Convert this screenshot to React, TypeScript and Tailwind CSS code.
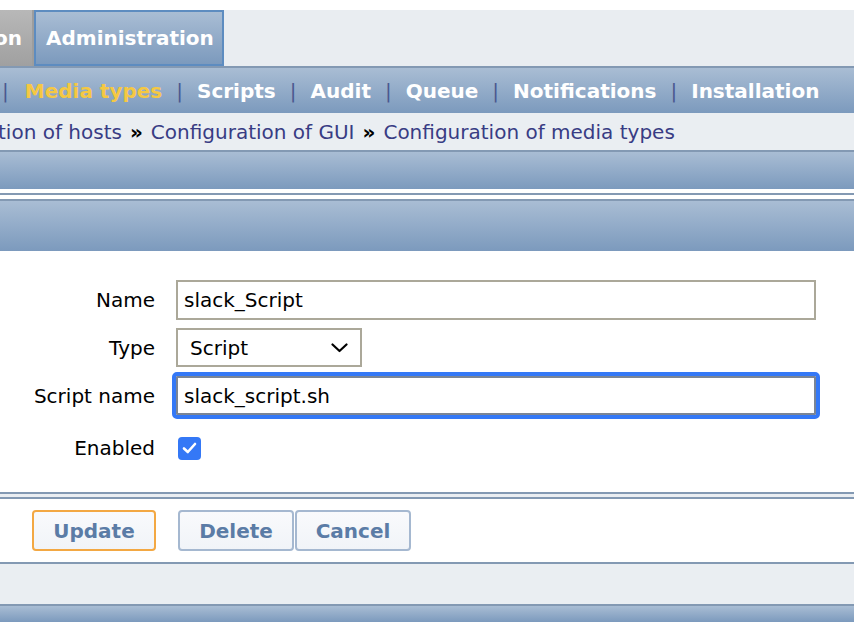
import { useState } from "react";

const font = "font-['DejaVu_Sans','Liberation_Sans',sans-serif]";

const subMenu = ["Media types", "Scripts", "Audit", "Queue", "Notifications", "Installation"];

const Bar = ({ h }: { h: string }) => (
  <div className={`${h} border-t-2 border-[#8399b3] bg-linear-to-b from-[#a9bdd4] to-[#7c9abd]`} />
);

const FormRow = ({ label, children, className = "" }: { label: string; children: React.ReactNode; className?: string }) => (
  <div className={`flex items-center ${className}`}>
    <label className="w-[155px] text-right text-[20px] text-black whitespace-nowrap">{label}</label>
    <div className="ml-[21px] flex items-center">{children}</div>
  </div>
);

const btn =
  "h-[41px] rounded-[4px] border-2 bg-linear-to-b from-[#f9fafc] to-[#f1f4f8] text-[20px] font-bold text-[#5b7ca6]";

export default function App() {
  const [name, setName] = useState("slack_Script");
  const [script, setScript] = useState("slack_script.sh");
  const [enabled, setEnabled] = useState(true);

  return (
    <div className={`w-[854px] h-[622px] overflow-hidden bg-white ${font}`}>
      <div className="h-[10px] bg-white" />

      {/* main tabs */}
      <div className="flex h-[56px] bg-[#e9edf1]">
        <div className="flex w-[34px] items-center justify-end overflow-hidden border-r-2 border-[#9d9d9d] bg-linear-to-b from-[#b8b8b8] to-[#a0a0a0] pr-[10px]">
          <span className="text-[20px] font-bold text-white">on</span>
        </div>
        <div className="flex w-[190px] items-center border-2 border-[#5d8cc0] bg-linear-to-b from-[#a9bdd4] to-[#7c9abd] pl-[10px]">
          <span className="text-[20px] font-bold text-white">Administration</span>
        </div>
      </div>

      {/* sub menu */}
      <div className="flex h-[47px] items-center whitespace-nowrap border-t-2 border-[#8399b3] bg-linear-to-b from-[#a9bdd4] to-[#7c9abd] text-[20px]">
        {subMenu.map((item, i) => (
          <div key={item} className="flex items-center">
            <span className={`${i === 0 ? "ml-[2px] mr-[16px]" : "mx-[14px]"} font-normal text-[#4b5890]`}>|</span>
            <span className={`font-bold ${i === 0 ? "text-[#f5c842]" : "text-white"}`}>{item}</span>
          </div>
        ))}
      </div>

      {/* breadcrumb */}
      <div className="flex h-[37px] items-center whitespace-nowrap bg-[#eaeef2] text-[20px] text-[#383c84]">
        <span className="-ml-[2px]">tion of hosts</span>
        <span className="mx-[8px] font-bold text-black">»</span>
        <span>Configuration of GUI</span>
        <span className="mx-[8px] font-bold text-black">»</span>
        <span>Configuration of media types</span>
      </div>

      <Bar h="h-[39px]" />
      <div className="h-[4px] bg-white" />
      <div className="h-[2px] bg-[#8399b3]" />
      <div className="h-[4px] bg-white" />
      <Bar h="h-[52px]" />

      {/* form */}
      <div className="flex h-[241px] flex-col bg-white pt-[29px]">
        <FormRow label="Name">
          <input
            value={name}
            onChange={(e) => setName(e.target.value)}
            className="h-[40px] w-[640px] border-2 border-[#aba899] px-[6px] text-[20px] text-black outline-none"
          />
        </FormRow>
        <FormRow label="Type" className="mt-[8px]">
          <div className="flex h-[39px] w-[186px] items-center justify-between border-2 border-[#aba899] bg-white pl-[12px] pr-[12px]">
            <span className="text-[20px] text-black">Script</span>
            <svg width="17" height="10" viewBox="0 0 17 10" fill="none">
              <path d="M1.5 1.5 L8.5 8 L15.5 1.5" stroke="#000" strokeWidth="2.2" strokeLinecap="round" strokeLinejoin="round" />
            </svg>
          </div>
        </FormRow>
        <FormRow label="Script name" className="mt-[9px]">
          <input
            value={script}
            onChange={(e) => setScript(e.target.value)}
            className="h-[39px] w-[640px] rounded-[1px] border-2 border-[#7b8595] px-[6px] text-[20px] text-black outline-4 outline-[#3478f6]"
          />
        </FormRow>
        <FormRow label="Enabled" className="mt-[18px]">
          <button
            onClick={() => setEnabled(!enabled)}
            className={`ml-[2px] flex h-[23px] w-[23px] items-center justify-center rounded-[4px] ${enabled ? "bg-[#3478f6]" : "border-2 border-gray-400 bg-white"}`}
          >
            {enabled && (
              <svg width="15" height="12" viewBox="0 0 15 12" fill="none">
                <path d="M2 6.5 L5.8 10 L13 2" stroke="#fff" strokeWidth="2.6" strokeLinecap="round" strokeLinejoin="round" />
              </svg>
            )}
          </button>
        </FormRow>
      </div>

      <div className="h-[2px] bg-[#8399b3]" />
      <div className="h-[3px] bg-[#eaeef2]" />
      <div className="h-[2px] bg-[#8399b3]" />

      {/* buttons */}
      <div className="flex h-[63px] items-start bg-white pl-[32px] pt-[11px]">
        <button className={`${btn} w-[124px] border-[#f3a843]`}>Update</button>
        <div className="ml-[22px] flex gap-[1px]">
          <button className={`${btn} w-[116px] border-[#a5b8d0]`}>Delete</button>
          <button className={`${btn} w-[116px] border-[#a5b8d0]`}>Cancel</button>
        </div>
      </div>

      <div className="h-[2px] bg-[#8399b3]" />
      <div className="h-[40px] bg-[#eaeef2]" />
      <Bar h="h-[18px]" />
    </div>
  );
}
